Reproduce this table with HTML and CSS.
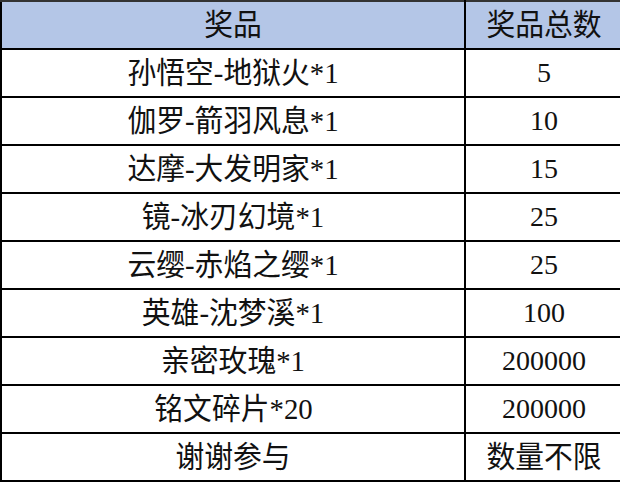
FILE: index.html
```html
<!DOCTYPE html>
<html lang="zh-CN">
<head>
<meta charset="utf-8">
<title>奖品</title>
<link rel="stylesheet" href="styles.css">
</head>
<body>
<table class="prizes">
  <thead>
    <tr><th class="col-name"><span class="txt">奖品</span></th><th class="col-count"><span class="txt">奖品总数</span></th></tr>
  </thead>
  <tbody>
    <tr><td><span class="txt">孙悟空-地狱火*1</span></td><td class="num">5</td></tr>
    <tr><td><span class="txt">伽罗-箭羽风息*1</span></td><td class="num">10</td></tr>
    <tr><td><span class="txt">达摩-大发明家*1</span></td><td class="num">15</td></tr>
    <tr><td><span class="txt">镜-冰刃幻境*1</span></td><td class="num">25</td></tr>
    <tr><td><span class="txt">云缨-赤焰之缨*1</span></td><td class="num">25</td></tr>
    <tr><td><span class="txt">英雄-沈梦溪*1</span></td><td class="num">100</td></tr>
    <tr><td><span class="txt">亲密玫瑰*1</span></td><td class="num">200000</td></tr>
    <tr><td><span class="txt">铭文碎片*20</span></td><td class="num">200000</td></tr>
    <tr><td><span class="txt">谢谢参与</span></td><td><span class="txt">数量不限</span></td></tr>
  </tbody>
</table>
</body>
</html>
```
FILE: styles.css
```css
html, body {
  margin: 0;
  padding: 0;
  background: #ffffff;
}
.prizes {
  border-collapse: collapse;
  width: 620px;
  table-layout: fixed;
  font-family: "Liberation Serif", "Noto Sans CJK SC", serif;
  font-size: 30px;
  color: #111;
}
.prizes th,
.prizes td {
  border: 2px solid #000;
  height: 46px;
  padding: 0;
  text-align: center;
  vertical-align: middle;
  font-weight: normal;
  line-height: 46px;
  white-space: nowrap;
}
.prizes th {
  background: #b4c6e7;
}
.prizes thead tr th {
  border-top-color: #333;
}
.txt {
  display: inline-block;
  transform: scaleX(0.96);
}
.prizes td.num {
  font-size: 28px;
}
.col-name {
  width: 462px;
}
.col-count {
  width: 156px;
}
```
